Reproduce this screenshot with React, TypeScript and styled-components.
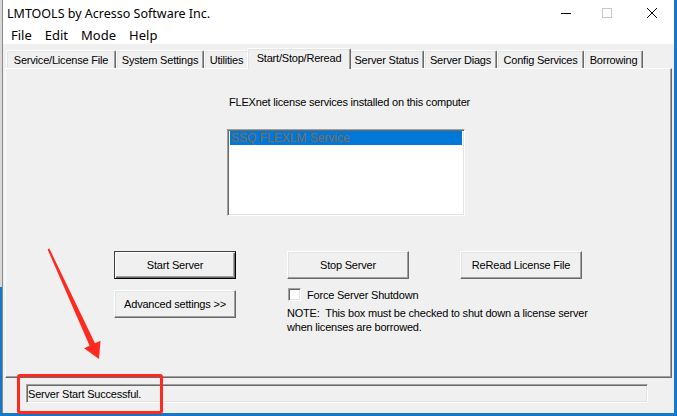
import React from 'react'
import styled, { createGlobalStyle } from 'styled-components'

const GlobalStyle = createGlobalStyle`
  html, body {
    margin: 0;
    padding: 0;
    background: #1677c9;
  }
  body {
    width: 677px;
    height: 416px;
    overflow: hidden;
  }
`

const Screen = styled.div`
  position: relative;
  width: 677px;
  height: 416px;
  padding-left: 2px;
  box-sizing: border-box;
  background:
    linear-gradient(to bottom, #d8d8d8 0, #d8d8d8 287px, #1677c9 287px) left top / 2px 100% no-repeat,
    #1677c9;
`

const Window = styled.div`
  width: 672px;
  height: 413px;
  background: #f0f0f0;
  border-left: 1px solid #8a8a8a;
  box-sizing: border-box;
  display: flex;
  flex-direction: column;
  font-family: "Liberation Sans", Arial, sans-serif;
  font-size: 11px;
  letter-spacing: -0.2px;
  color: #000;
`

const TitleBar = styled.div`
  height: 26px;
  background: #fff;
  display: flex;
  align-items: center;
  padding-left: 4px;
  letter-spacing: 0;
`

const Title = styled.div`
  flex: 1;
  font-family: "Noto Sans", "Noto Sans CJK SC", sans-serif;
  font-size: 12.5px;
  color: #000;
`

const Caption = styled.div`
  width: 45px;
  height: 26px;
  display: flex;
  align-items: center;
  justify-content: center;
`

const MenuBar = styled.div`
  height: 18px;
  background: #fff;
  display: flex;
  align-items: center;
  gap: 13px;
  padding-left: 8px;
  font-family: "Noto Sans", "Noto Sans CJK SC", sans-serif;
  font-size: 13px;
  letter-spacing: 0;
`

const Body = styled.div`
  flex: 1;
  display: flex;
  flex-direction: column;
  padding: 4px 2px 0 2px;
`

const TabStrip = styled.div`
  height: 20px;
  display: flex;
  align-items: flex-end;
  padding-left: 1px;
  position: relative;
  z-index: 1;
`

const Tab = styled.div<{ $w: number; $active?: boolean }>`
  width: ${p => p.$w + (p.$active ? 4 : 0)}px;
  height: ${p => (p.$active ? 21 : 18)}px;
  margin: ${p => (p.$active ? '0 -2px -1px -2px' : '0')};
  box-sizing: border-box;
  border-top: 1px solid #fff;
  border-left: 1px solid #fff;
  border-right: 1px solid #696969;
  box-shadow: inset -1px 0 0 #a0a0a0, inset 1px 1px 0 #e3e3e3;
  border-top-left-radius: 2px;
  border-top-right-radius: 2px;
  background: #f0f0f0;
  display: flex;
  align-items: ${p => (p.$active ? 'flex-start' : 'center')};
  padding-top: ${p => (p.$active ? '3px' : '0')};
  justify-content: center;
  white-space: nowrap;
  position: relative;
  z-index: ${p => (p.$active ? 2 : 1)};
`

const Panel = styled.div`
  height: 310px;
  box-sizing: border-box;
  border-top: 1px solid #fff;
  border-left: 1px solid #fff;
  border-right: 1px solid #696969;
  border-bottom: 1px solid #696969;
  box-shadow: inset -1px -1px 0 #a0a0a0;
  display: flex;
  flex-direction: column;
`

const ListLabel = styled.div`
  margin: 27px 0 0 223px;
  line-height: 13px;
`

const ListBox = styled.div`
  margin: 20px 0 0 221px;
  width: 238px;
  height: 87px;
  box-sizing: border-box;
  background: #fff;
  border-top: 1px solid #a0a0a0;
  border-left: 1px solid #a0a0a0;
  border-right: 1px solid #fff;
  border-bottom: 1px solid #fff;
  box-shadow: inset 1px 1px 0 #696969, inset -1px -1px 0 #e3e3e3;
  padding: 1px 2px 0 2px;
`

const ListItem = styled.div<{ $selected?: boolean }>`
  height: 14px;
  line-height: 14px;
  padding-left: 1px;
  font-size: 12px;
  letter-spacing: 0;
  background: ${p => (p.$selected ? '#0078d7' : 'transparent')};
  color: ${p => (p.$selected ? '#856b4f' : '#000')};
`

const Controls = styled.div`
  margin: 35px 0 0 108px;
  display: grid;
  grid-template-columns: 122px 122px 122px;
  column-gap: 51px;
  row-gap: 9px;
`

const Button = styled.div<{ $default?: boolean }>`
  height: 28px;
  box-sizing: border-box;
  display: flex;
  align-items: center;
  justify-content: center;
  background: #f0f0f0;
  border-top: 1px solid ${p => (p.$default ? '#404040' : '#fff')};
  border-left: 1px solid ${p => (p.$default ? '#404040' : '#fff')};
  border-right: 1px solid ${p => (p.$default ? '#000' : '#696969')};
  border-bottom: 1px solid ${p => (p.$default ? '#000' : '#696969')};
  box-shadow: ${p =>
    p.$default
      ? 'inset 1px 1px 0 #fff, inset -1px -1px 0 #696969, inset -2px -2px 0 #a0a0a0'
      : 'inset -1px -1px 0 #a0a0a0, inset 1px 1px 0 #e3e3e3'};
  white-space: nowrap;
`

const AdvancedButton = styled(Button)`
  margin-top: 2px;
`

const ShutdownBlock = styled.div`
  grid-column: 2 / span 2;
  display: flex;
  flex-direction: column;
  padding-left: 1px;
`

const CheckRow = styled.label`
  display: flex;
  align-items: center;
  gap: 6px;
  height: 13px;
`

const CheckBox = styled.span`
  width: 13px;
  height: 13px;
  box-sizing: border-box;
  background: #fff;
  border-top: 1px solid #a0a0a0;
  border-left: 1px solid #a0a0a0;
  border-right: 1px solid #fff;
  border-bottom: 1px solid #fff;
  box-shadow: inset 1px 1px 0 #696969, inset -1px -1px 0 #e3e3e3;
`

const Note = styled.div`
  margin: 5px 0 0 -1px;
  line-height: 14px;
  white-space: pre;
`

const StatusArea = styled.div`
  flex: 1;
  padding: 6px 0 0 21px;
`

const StatusField = styled.div`
  width: 622px;
  height: 19px;
  box-sizing: border-box;
  border-top: 1px solid #a0a0a0;
  border-left: 1px solid #a0a0a0;
  border-right: 1px solid #fff;
  border-bottom: 1px solid #fff;
  box-shadow: inset 1px 1px 0 #696969, inset -1px -1px 0 #e3e3e3;
  padding: 0 0 0 1px;
  display: flex;
  align-items: center;
`

const Highlight = styled.div`
  position: absolute;
  left: 17px;
  top: 374px;
  width: 146px;
  height: 40px;
  box-sizing: border-box;
  border: 3px solid #ff2a1f;
  border-radius: 3px;
  pointer-events: none;
`

const ArrowLayer = styled.svg`
  position: absolute;
  left: 0;
  top: 0;
  pointer-events: none;
`

const tabs = [
  { label: 'Service/License File', w: 110 },
  { label: 'System Settings', w: 88 },
  { label: 'Utilities', w: 45 },
  { label: 'Start/Stop/Reread', w: 100, active: true },
  { label: 'Server Status', w: 75 },
  { label: 'Server Diags', w: 73 },
  { label: 'Config Services', w: 87 },
  { label: 'Borrowing', w: 59 },
]

export default function App() {
  return (
    <Screen>
      <GlobalStyle />
      <Window>
        <TitleBar>
          <Title>LMTOOLS by Acresso Software Inc.</Title>
          <Caption>
            <svg width="12" height="12" viewBox="0 0 12 12" style={{ marginLeft: 8 }}>
              <line x1="1" y1="6.5" x2="11" y2="6.5" stroke="#000" strokeWidth="1" />
            </svg>
          </Caption>
          <Caption>
            <svg width="12" height="12" viewBox="0 0 12 12">
              <rect x="1.5" y="1.5" width="9" height="9" fill="none" stroke="#c8c8c8" strokeWidth="1" />
            </svg>
          </Caption>
          <Caption>
            <svg width="12" height="12" viewBox="0 0 12 12">
              <path d="M1 1 L11 11 M11 1 L1 11" stroke="#000" strokeWidth="1" />
            </svg>
          </Caption>
        </TitleBar>
        <MenuBar>
          <span>File</span>
          <span>Edit</span>
          <span>Mode</span>
          <span>Help</span>
        </MenuBar>
        <Body>
          <TabStrip>
            {tabs.map(t => (
              <Tab key={t.label} $w={t.w} $active={t.active}>
                {t.label}
              </Tab>
            ))}
          </TabStrip>
          <Panel>
            <ListLabel>FLEXnet license services installed on this computer</ListLabel>
            <ListBox>
              <ListItem $selected>SSQ FLEXLM Service</ListItem>
            </ListBox>
            <Controls>
              <Button $default>Start Server</Button>
              <Button>Stop Server</Button>
              <Button>ReRead License File</Button>
              <AdvancedButton>Advanced settings &gt;&gt;</AdvancedButton>
              <ShutdownBlock>
                <CheckRow>
                  <CheckBox />
                  Force Server Shutdown
                </CheckRow>
                <Note>
                  {'NOTE:  This box must be checked to shut down a license server\nwhen licenses are borrowed.'}
                </Note>
              </ShutdownBlock>
            </Controls>
          </Panel>
          <StatusArea>
            <StatusField>Server Start Successful.</StatusField>
          </StatusArea>
        </Body>
      </Window>
      <Highlight />
      <ArrowLayer width="677" height="416" viewBox="0 0 677 416">
        <polygon
          points="49.4,248.6 95,343.2 100.5,340.7 99,359 84.1,348.3 89.6,345.8 47.6,249.4"
          fill="#ff2a1f"
        />
      </ArrowLayer>
    </Screen>
  )
}
